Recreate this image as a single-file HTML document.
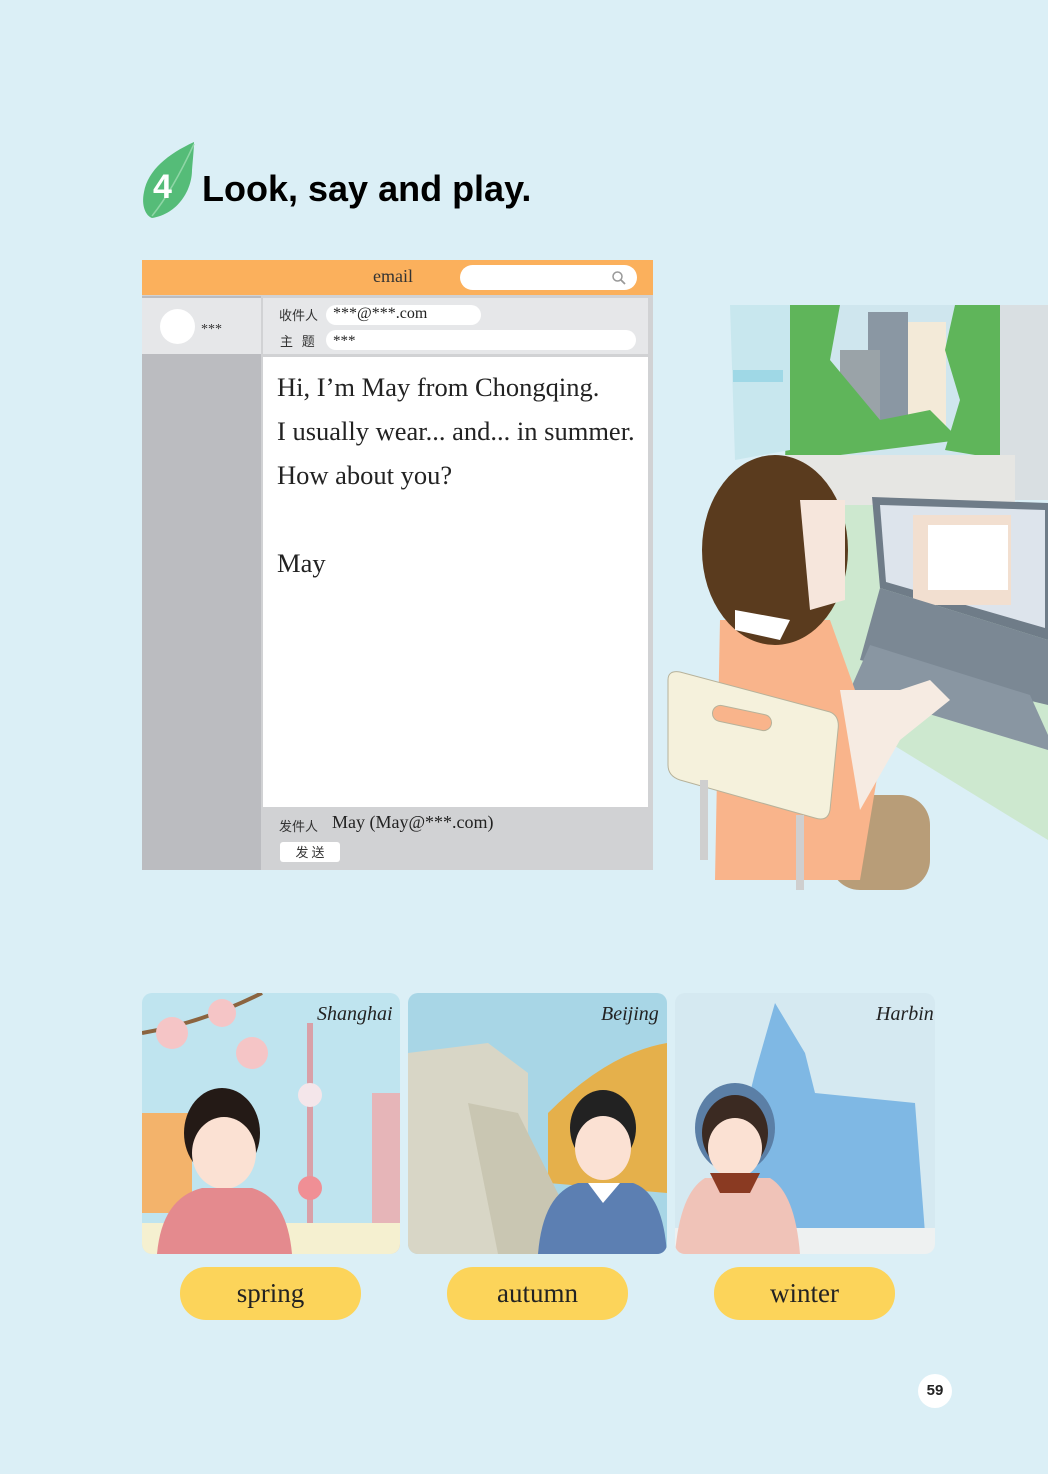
<!DOCTYPE html>
<html><head><meta charset="utf-8"><style>
*{margin:0;padding:0;box-sizing:border-box}
body{width:1048px;height:1474px;background:#dbeff6;position:relative;overflow:hidden;font-family:"Liberation Serif","Noto Serif CJK SC",serif}
.a{position:absolute}
.title{left:202px;top:168px;font:bold 36px "Liberation Sans",sans-serif;color:#000}
.cn{font-family:"Noto Sans CJK SC",sans-serif;color:#333;font-size:13px}
.body p{font-size:26.5px;color:#222;position:absolute;left:277px;white-space:nowrap}
.btn{background:#fcd45a;border-radius:26px;height:53px;width:181px;top:1267px;text-align:center;line-height:53px;font-size:27px;color:#222}
.city{font:italic 20px 'Liberation Serif',serif;color:#222;top:1003px}
</style></head><body>
<svg class="a" style="left:138px;top:140px" width="60" height="80" viewBox="0 0 60 80"><path d="M56 2 C30 14 10 30 6 52 C3 66 8 76 14 78 C40 74 54 50 54 30 C55 18 56 8 56 2Z" fill="#55bc78"/><path d="M14 76 C30 56 44 30 56 4" stroke="#8fd6a6" stroke-width="1.5" fill="none"/></svg>
<div class="a" style="left:153px;top:168px;font:bold 34px 'Liberation Sans',sans-serif;color:#fff">4</div>
<div class="a title">Look, say and play.</div>

<div class="a" style="left:142px;top:260px;width:511px;height:610px;background:#d1d2d4"></div>
<div class="a" style="left:142px;top:260px;width:511px;height:35px;background:#fbb05c"></div>
<div class="a" style="left:373px;top:266px;font-size:18px;color:#333">email</div>
<div class="a" style="left:460px;top:265px;width:177px;height:25px;background:#fff;border-radius:13px"></div>
<svg class="a" style="left:611px;top:270px" width="16" height="16"><circle cx="6.5" cy="6.5" r="4.5" stroke="#999" stroke-width="1.5" fill="none"/><path d="M10 10 L14 14" stroke="#999" stroke-width="1.8"/></svg>
<div class="a" style="left:142px;top:296px;width:119px;height:574px;background:#bbbcc0"></div>
<div class="a" style="left:142px;top:298px;width:119px;height:56px;background:#e6e7e9"></div>
<div class="a" style="left:160px;top:309px;width:35px;height:35px;border-radius:50%;background:#fff"></div>
<div class="a" style="left:201px;top:322px;font-size:14px;color:#333">***</div>
<div class="a" style="left:263px;top:298px;width:385px;height:56px;background:#e6e7e9"></div>
<div class="a cn" style="left:279px;top:305px">收件人</div>
<div class="a" style="left:326px;top:305px;width:155px;height:20px;background:#fff;border-radius:10px"></div>
<div class="a" style="left:333px;top:305px;font-size:16px;color:#222">***@***.com</div>
<div class="a cn" style="left:280px;top:331px">主&nbsp;&nbsp;&nbsp;题</div>
<div class="a" style="left:326px;top:330px;width:310px;height:20px;background:#fff;border-radius:10px"></div>
<div class="a" style="left:333px;top:333px;font-size:15px;color:#222">***</div>
<div class="a body" style="left:263px;top:357px;width:385px;height:450px;background:#fff"></div>
<div class="body">
<p style="top:372px">Hi, I’m May from Chongqing.</p>
<p style="top:416px">I usually wear... and... in summer.</p>
<p style="top:460px">How about you?</p>
<p style="top:548px">May</p>
</div>
<div class="a cn" style="left:279px;top:816px">发件人</div>
<div class="a" style="left:332px;top:812px;font-size:18px;color:#222">May (May@***.com)</div>
<div class="a cn" style="left:280px;top:842px;width:60px;height:20px;background:#fff;border-radius:3px;text-align:center;line-height:20px">发 送</div>

<svg class="a" style="left:665px;top:305px" width="383" height="590" viewBox="665 305 383 590">
<rect x="785" y="305" width="220" height="158" fill="#cfe6ee"/>
<rect x="868" y="312" width="40" height="120" fill="#8a97a3"/>
<rect x="908" y="322" width="38" height="110" fill="#f3ead8"/>
<rect x="840" y="350" width="40" height="90" fill="#9aa3a8"/>
<path d="M790 305 L840 305 L830 360 L880 420 L930 410 L960 440 L785 462Z" fill="#5fb55a"/>
<path d="M955 305 L1005 305 L1005 460 L945 450 L960 400 L945 350Z" fill="#5fb55a"/>
<rect x="1000" y="305" width="48" height="195" fill="#d9dfe2"/>
<rect x="785" y="455" width="230" height="50" fill="#e6e6e3"/>
<path d="M730 305 L790 305 L790 450 L735 460 Z" fill="#c8e7ee"/>
<rect x="733" y="370" width="50" height="12" fill="#9fd8e6"/>
<path d="M820 505 L1048 505 L1048 840 L820 700Z" fill="#cde8cf"/>
<path d="M872 497 L1048 503 L1048 640 L880 588Z" fill="#6f7c88"/>
<path d="M880 505 L1045 510 L1045 628 L886 582Z" fill="#dde4ec"/>
<rect x="913" y="515" width="98" height="90" fill="#f2dfd0"/>
<rect x="928" y="525" width="80" height="65" fill="#fff"/>
<path d="M880 588 L1048 640 L1048 705 L860 660Z" fill="#7b8894"/>
<path d="M870 645 L1030 695 L1048 735 L1048 750 L850 690Z" fill="#8996a2"/>
<rect x="830" y="795" width="100" height="95" fill="#b89d78" rx="30"/>
<path d="M720 620 L830 620 L880 760 L860 880 L715 880Z" fill="#f9b48b"/>
<path d="M840 690 L900 690 L930 680 L950 700 L900 740 L860 810Z" fill="#f6ebe2"/>
<ellipse cx="775" cy="550" rx="73" ry="95" fill="#5a3b1e"/>
<path d="M800 500 L845 500 L845 600 L810 610Z" fill="#f6e6dc"/>
<path d="M735 610 L790 620 L780 640 L735 630Z" fill="#fff"/>
<path d="M668 680 Q668 670 680 672 L830 712 Q840 716 838 730 L830 810 Q828 822 815 818 L680 780 Q668 776 668 765Z" fill="#f5f1dc" stroke="#b7b29a"/>
<rect x="712" y="710" width="60" height="16" rx="8" fill="#f9b48b" stroke="#b7b29a" transform="rotate(12 742 718)"/>
<rect x="700" y="780" width="8" height="80" fill="#cfcfcf"/>
<rect x="796" y="815" width="8" height="75" fill="#cfcfcf"/>
</svg>

<svg class="a" style="left:142px;top:993px" width="258" height="261"><defs><clipPath id="c1"><rect width="258" height="261" rx="10"/></clipPath></defs><g clip-path="url(#c1)">
<rect width="258" height="261" fill="#bfe4ef"/><rect x="0" y="120" width="50" height="100" fill="#f3b36b"/>
<rect x="230" y="100" width="28" height="160" fill="#e6b5b8"/><rect x="165" y="30" width="6" height="230" fill="#d9a0a8"/><circle cx="168" cy="102" r="12" fill="#f4e6ea"/><circle cx="168" cy="195" r="12" fill="#f08f95"/>
<path d="M0 40 Q60 30 120 0" stroke="#8b6440" stroke-width="4" fill="none"/><circle cx="30" cy="40" r="16" fill="#f5c5c6"/><circle cx="80" cy="20" r="14" fill="#f5c5c6"/><circle cx="110" cy="60" r="16" fill="#f5c5c6"/>
<rect x="0" y="230" width="258" height="31" fill="#f5f0d0"/>
<ellipse cx="80" cy="140" rx="38" ry="45" fill="#241a16"/><ellipse cx="82" cy="160" rx="32" ry="36" fill="#fbe1d3"/>
<path d="M15 261 Q20 205 60 195 L110 195 Q145 205 150 261Z" fill="#e48a8e"/></g></svg>
<svg class="a" style="left:408px;top:993px" width="259" height="261"><defs><clipPath id="c2"><rect width="259" height="261" rx="10"/></clipPath></defs><g clip-path="url(#c2)">
<rect width="259" height="261" fill="#a8d6e6"/><path d="M140 120 Q200 60 259 50 L259 200 L140 190Z" fill="#e5b04b"/><path d="M0 60 L80 50 L120 80 L120 261 L0 261Z" fill="#d8d6c6"/><path d="M60 110 L110 120 L180 261 L90 261Z" fill="#c9c6b2"/>
<ellipse cx="195" cy="135" rx="33" ry="38" fill="#222"/><ellipse cx="195" cy="155" rx="28" ry="32" fill="#fbe1d3"/><path d="M130 261 Q135 200 170 190 L225 190 Q255 200 259 261Z" fill="#5c7fb2"/><path d="M180 190 L195 210 L212 190Z" fill="#fff"/></g></svg>
<svg class="a" style="left:675px;top:993px" width="260" height="261"><defs><clipPath id="c3"><rect width="260" height="261" rx="10"/></clipPath></defs><g clip-path="url(#c3)">
<rect width="260" height="261" fill="#d5e9f1"/><path d="M50 200 L80 80 L100 10 L130 60 L140 100 L240 110 L250 240 L50 240Z" fill="#7fb8e4"/><rect x="0" y="235" width="260" height="26" fill="#eef1f1"/>
<ellipse cx="60" cy="135" rx="40" ry="45" fill="#5b7fa6"/><ellipse cx="60" cy="140" rx="33" ry="38" fill="#3b2a22"/><ellipse cx="60" cy="155" rx="27" ry="30" fill="#fbe1d3"/><path d="M0 261 Q5 200 30 185 L95 185 Q120 200 125 261Z" fill="#f0c3b8"/><path d="M35 180 L85 180 L75 200 L45 200Z" fill="#8a3a22"/></g></svg>
<div class="a city" style="left:317px">Shanghai</div>
<div class="a city" style="left:601px">Beijing</div>
<div class="a city" style="left:876px">Harbin</div>
<div class="a btn" style="left:180px">spring</div>
<div class="a btn" style="left:447px">autumn</div>
<div class="a btn" style="left:714px">winter</div>
<div class="a" style="left:918px;top:1374px;width:34px;height:34px;border-radius:50%;background:#fff;text-align:center;font:bold 15px/34px 'Liberation Sans',sans-serif;color:#222">59</div>
</body></html>
